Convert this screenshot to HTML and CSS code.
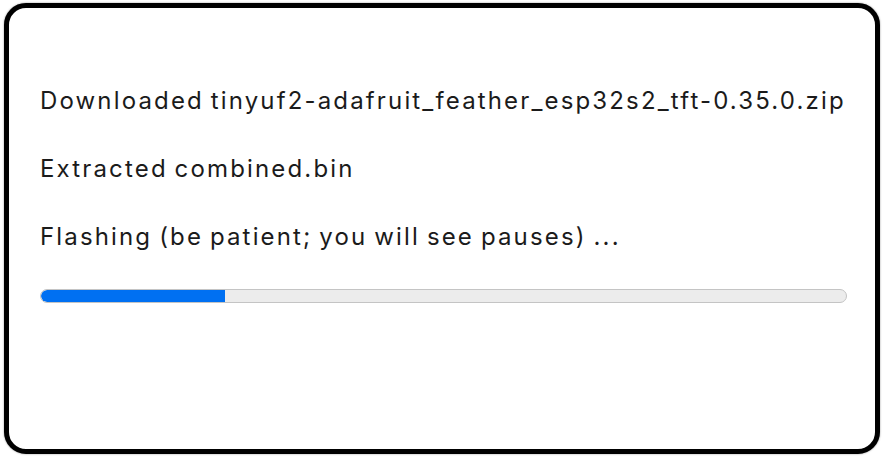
FILE: index.html
```html
<!DOCTYPE html>
<html lang="en">
<head>
<meta charset="utf-8">
<title>Flash firmware</title>
<link rel="stylesheet" href="styles.css">
</head>
<body>
  <div class="dialog">
    <p class="step">Downloaded tinyuf2-adafruit_feather_esp32s2_tft-0.35.0.zip</p>
    <p class="step">Extracted combined.bin</p>
    <p class="step">Flashing (be patient; you will see pauses) ...</p>
    <div class="progress">
      <div class="progress-fill" style="width: 22.9%"></div>
    </div>
  </div>
</body>
</html>
```

FILE: styles.css
```css
html, body {
  margin: 0;
  padding: 0;
  background: #ffffff;
}

body {
  padding: 3px 4px 3px 4px;
  width: 884px;
  height: 457px;
  box-sizing: border-box;
}

.dialog {
  box-sizing: border-box;
  width: 876px;
  height: 451px;
  border: 5px solid #000;
  border-radius: 22px;
  box-shadow: 0 0 2px rgba(0, 0, 0, 0.45);
  background: #fff;
  padding: 78px 28px 0 31px;
  font-family: Inter, "Open Sans", sans-serif;
  color: #1b1b1b;
}

.step {
  margin: 0 0 38px 0;
  font-size: 24px;
  letter-spacing: 2.15px;
  word-spacing: -2px;
  line-height: 30px;
  white-space: nowrap;
}

.progress {
  margin-top: -1px;
  height: 14px;
  border-radius: 8px;
  background: #ececec;
  border: 1px solid #c4c4c4;
  overflow: hidden;
  box-sizing: border-box;
}

.progress-fill {
  height: 100%;
  background: #0070f2;
  border-radius: 8px 0 0 8px;
}
```
